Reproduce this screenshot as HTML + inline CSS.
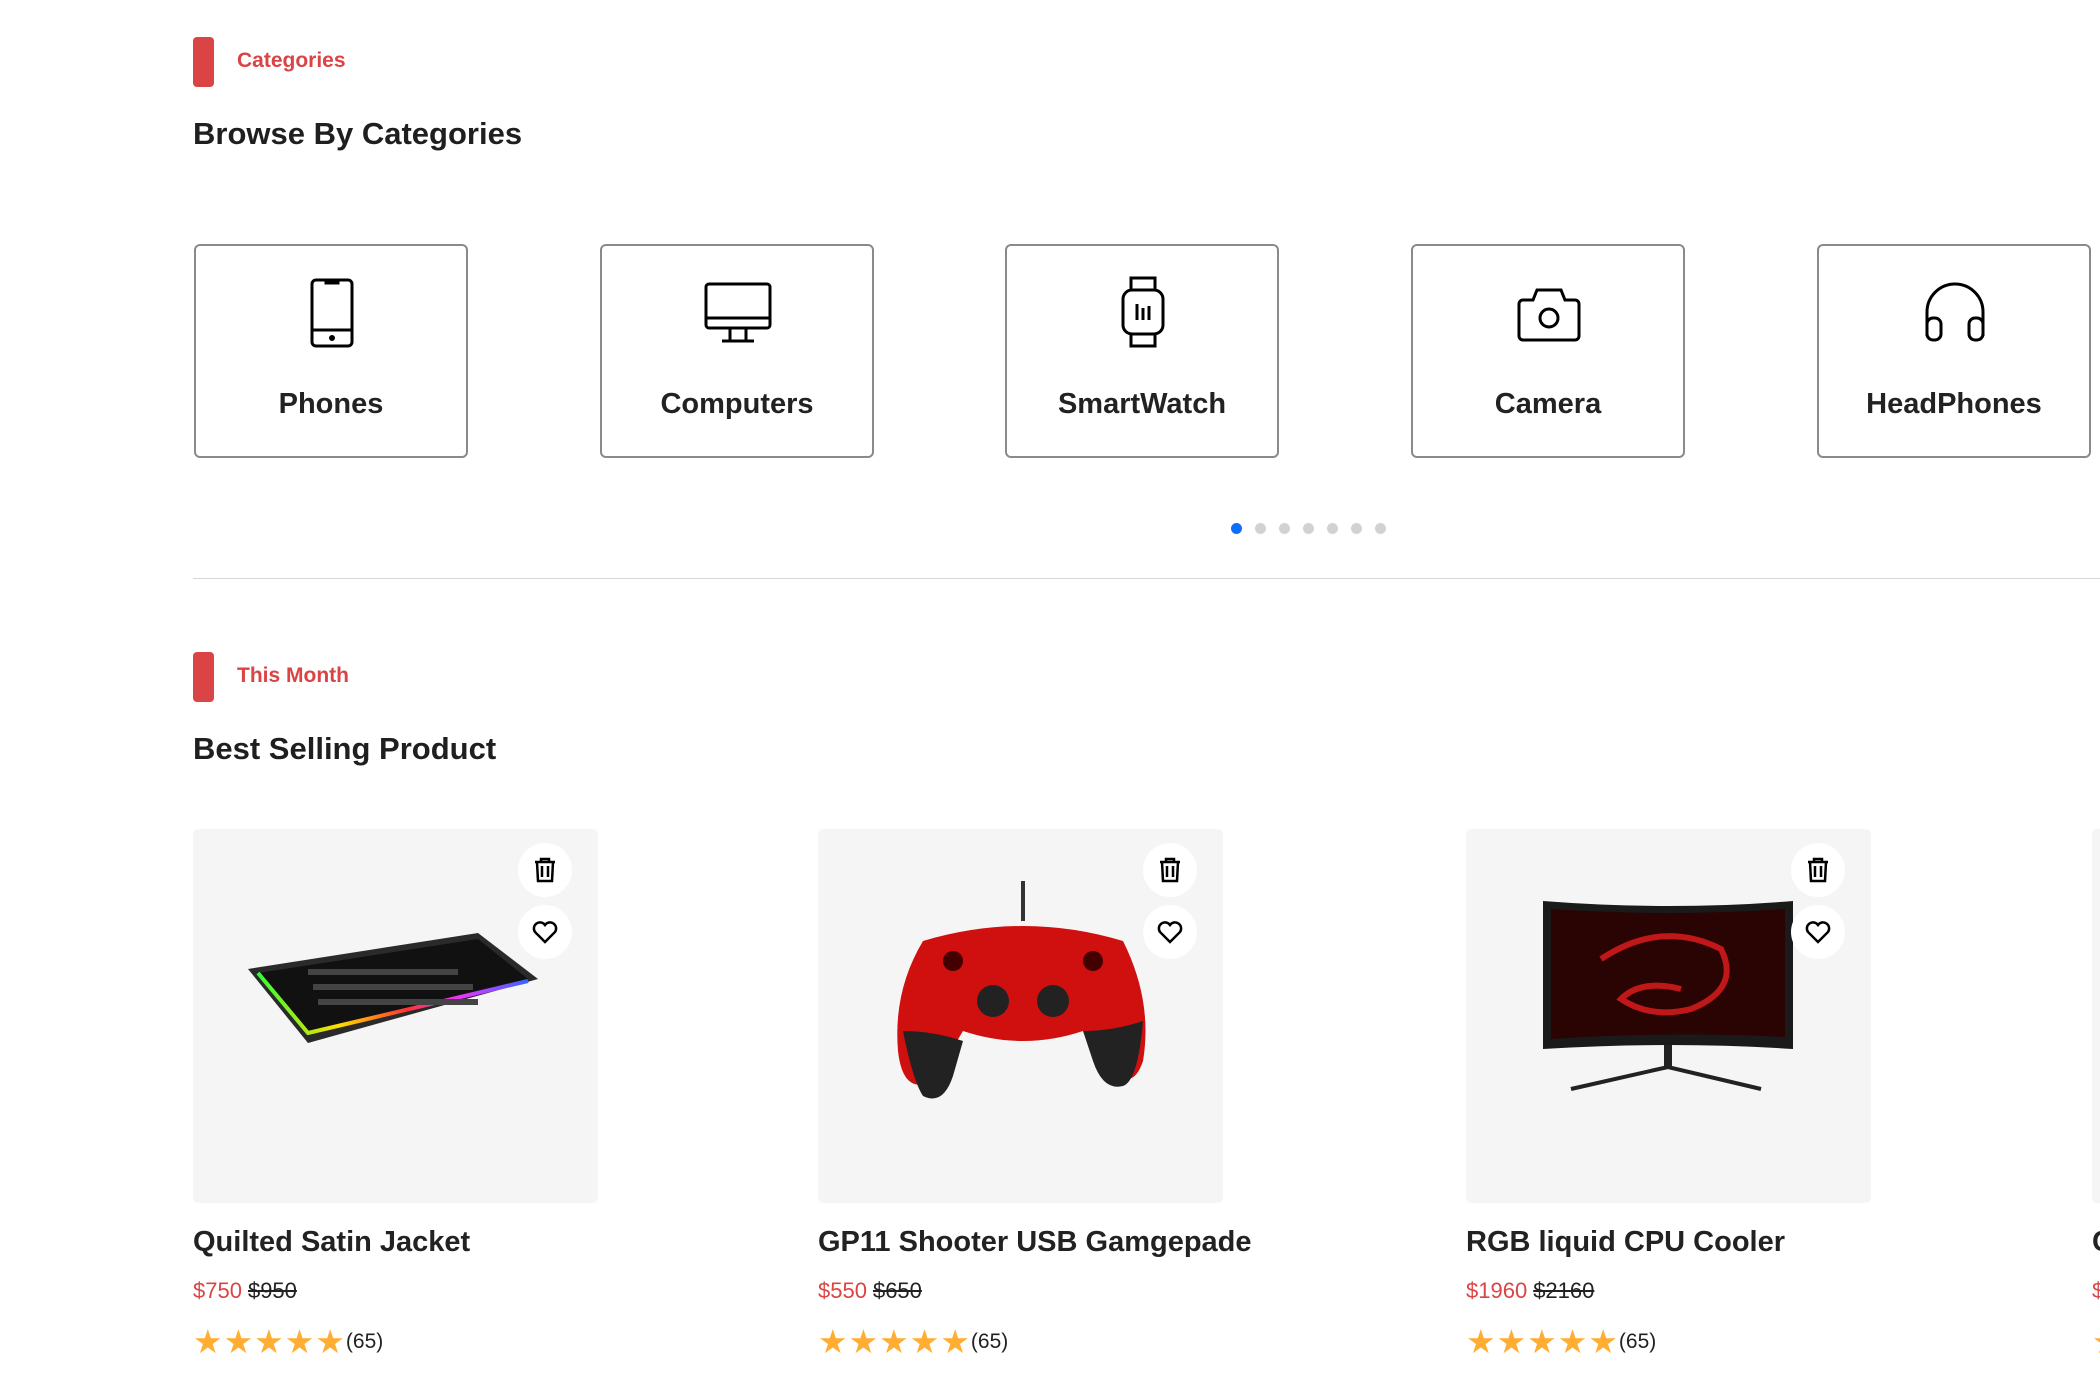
<!DOCTYPE html>
<html><head><meta charset="utf-8"><style>
*{margin:0;padding:0;box-sizing:border-box}
body{width:2100px;height:1400px;background:#fff;font-family:"Liberation Sans",Arial,sans-serif;color:#1f1f1f;position:relative;overflow:hidden}
.abs{position:absolute}
.bar{position:absolute;left:193px;width:21px;height:50px;background:#DB4444;border-radius:4px}
.tag{position:absolute;left:237px;color:#DB4444;font-size:21px;font-weight:bold}
.h{position:absolute;left:193px;font-size:31px;font-weight:bold;letter-spacing:0}
.cat{position:absolute;top:244px;width:274px;height:214px;border:2.5px solid #8a8a8a;border-radius:6px}
.cat svg{position:absolute;left:102px;top:30px}
.cat span{position:absolute;left:0;right:0;top:142px;text-align:center;font-size:29px;font-weight:bold;color:#222}
.dot{position:absolute;top:523px;width:11px;height:11px;border-radius:50%;background:#d2d2d2}
.card{position:absolute;top:829px;width:405px;height:374px;background:#f5f5f5;border-radius:5px}
.ic{position:absolute;left:325px;width:54px;height:54px;border-radius:50%;background:#fff}
.ic svg{position:absolute;left:13px;top:13px}
.t{position:absolute;top:1226px;font-size:29px;font-weight:bold;color:#222}
.p{position:absolute;top:1278px;font-size:22px;color:#DB4444}
.p s{color:#222;margin-left:6px}
.st{position:absolute;top:1322px;font-size:33px;color:#FFAD33;letter-spacing:1px}
.st b{font-weight:normal;color:#222;font-size:21px;letter-spacing:0;position:relative;top:-5px}
</style></head><body>
<div class="bar" style="top:37px"></div>
<div class="tag" style="top:49px">Categories</div>
<div class="h" style="top:116px">Browse By Categories</div>

<div class="cat" style="left:194px"><svg width="68" height="72" viewBox="0 0 68 72" fill="none" stroke="#000" stroke-width="3"><rect x="14" y="4" width="40" height="66" rx="4"/><line x1="14" y1="54" x2="54" y2="54"/><path d="M28 5h12v2H28z"/><circle cx="34" cy="62" r="1.5" fill="#000"/></svg><span>Phones</span></div>
<div class="cat" style="left:600px"><svg width="68" height="72" viewBox="0 0 68 72" fill="none" stroke="#000" stroke-width="3"><rect x="2" y="8" width="64" height="44" rx="3"/><line x1="2" y1="42" x2="66" y2="42"/><line x1="26" y1="52" x2="26" y2="64"/><line x1="42" y1="52" x2="42" y2="64"/><line x1="18" y1="65" x2="50" y2="65"/></svg><span>Computers</span></div>
<div class="cat" style="left:1005px"><svg width="68" height="72" viewBox="0 0 68 72" fill="none" stroke="#000" stroke-width="3"><rect x="22" y="2" width="24" height="12"/><rect x="22" y="58" width="24" height="12"/><rect x="14" y="14" width="40" height="44" rx="9"/><line x1="28" y1="28" x2="28" y2="44"/><line x1="34" y1="32" x2="34" y2="44"/><line x1="40" y1="30" x2="40" y2="44"/></svg><span>SmartWatch</span></div>
<div class="cat" style="left:1411px"><svg width="68" height="72" viewBox="0 0 68 72" fill="none" stroke="#000" stroke-width="3"><path d="M4 28a4 4 0 0 1 4-4h10l4-10h24l4 10h10a4 4 0 0 1 4 4v32a4 4 0 0 1-4 4H8a4 4 0 0 1-4-4z"/><circle cx="34" cy="42" r="9"/></svg><span>Camera</span></div>
<div class="cat" style="left:1817px"><svg width="68" height="72" viewBox="0 0 68 72" fill="none" stroke="#000" stroke-width="3"><path d="M6 60V36a28 28 0 0 1 56 0v24"/><rect x="6" y="42" width="14" height="22" rx="6"/><rect x="48" y="42" width="14" height="22" rx="6"/></svg><span>HeadPhones</span></div>

<div class="dot" style="left:1231px;background:#0d6efd"></div>
<div class="dot" style="left:1255px"></div>
<div class="dot" style="left:1279px"></div>
<div class="dot" style="left:1303px"></div>
<div class="dot" style="left:1327px"></div>
<div class="dot" style="left:1351px"></div>
<div class="dot" style="left:1375px"></div>

<div class="abs" style="left:193px;top:578px;width:1907px;height:1px;background:#d6d6d6"></div>

<div class="bar" style="top:652px"></div>
<div class="tag" style="top:664px">This Month</div>
<div class="h" style="top:731px">Best Selling Product</div>

<!-- card 1 -->
<div class="card" style="left:193px">
<svg class="abs" style="left:55px;top:100px" width="300" height="140" viewBox="0 0 300 140">
<defs><linearGradient id="rb"><stop offset="0" stop-color="#3f3"/><stop offset=".3" stop-color="#fd0"/><stop offset=".55" stop-color="#f33"/><stop offset=".75" stop-color="#e3f"/><stop offset="1" stop-color="#36f"/></linearGradient></defs>
<polygon points="0,40 230,4 290,50 60,114" fill="#2a2a2a"/>
<polygon points="10,44 230,10 280,50 60,104" fill="#111"/>
<polyline points="10,44 60,104 280,52" fill="none" stroke="url(#rb)" stroke-width="4"/>
<g fill="#444"><rect x="60" y="40" width="150" height="6"/><rect x="65" y="55" width="160" height="6"/><rect x="70" y="70" width="160" height="6"/></g>
</svg>
<div class="ic" style="top:14px"><svg width="28" height="28" viewBox="0 0 28 28" fill="none" stroke="#000" stroke-width="2.5"><path d="M4 6h20M10 6V3h8v3M6 6l1 19h14l1-19M11 10v11M17 10v11"/></svg></div>
<div class="ic" style="top:76px"><svg width="28" height="28" viewBox="0 0 28 28" fill="none" stroke="#000" stroke-width="2.5"><path d="M14 24L4 14a5.5 5.5 0 0 1 10-7a5.5 5.5 0 0 1 10 7z"/></svg></div>
</div>
<div class="t" style="left:193px">Quilted Satin Jacket</div>
<div class="p" style="left:193px">$750<s>$950</s></div>
<div class="st" style="left:193px">★★★★★<b>(65)</b></div>

<!-- card 2 -->
<div class="card" style="left:818px">
<svg class="abs" style="left:75px;top:52px" width="260" height="230" viewBox="0 0 260 230">
<line x1="130" y1="0" x2="130" y2="40" stroke="#333" stroke-width="4"/>
<path d="M30 60Q130 30 230 60Q260 120 250 180Q240 210 220 190L190 150Q130 170 70 150L40 200Q10 215 5 170Q0 110 30 60z" fill="#d0100f"/>
<path d="M10 150Q20 200 30 215Q50 225 60 195L70 160Q40 150 10 150z" fill="#222"/>
<path d="M250 140Q245 200 230 205Q210 210 200 180L190 150Q220 150 250 140z" fill="#222"/>
<circle cx="100" cy="120" r="16" fill="#222"/><circle cx="160" cy="120" r="16" fill="#222"/>
<circle cx="60" cy="80" r="10" fill="#400"/><circle cx="200" cy="80" r="10" fill="#400"/>
</svg>
<div class="ic" style="top:14px"><svg width="28" height="28" viewBox="0 0 28 28" fill="none" stroke="#000" stroke-width="2.5"><path d="M4 6h20M10 6V3h8v3M6 6l1 19h14l1-19M11 10v11M17 10v11"/></svg></div>
<div class="ic" style="top:76px"><svg width="28" height="28" viewBox="0 0 28 28" fill="none" stroke="#000" stroke-width="2.5"><path d="M14 24L4 14a5.5 5.5 0 0 1 10-7a5.5 5.5 0 0 1 10 7z"/></svg></div>
</div>
<div class="t" style="left:818px">GP11 Shooter USB Gamgepade</div>
<div class="p" style="left:818px">$550<s>$650</s></div>
<div class="st" style="left:818px">★★★★★<b>(65)</b></div>

<!-- card 3 -->
<div class="card" style="left:1466px">
<svg class="abs" style="left:75px;top:70px" width="260" height="200" viewBox="0 0 260 200">
<path d="M2 2Q130 12 252 2V150Q130 142 2 150z" fill="#1a1a1a"/>
<path d="M10 10Q130 18 244 10V138Q130 132 10 140z" fill="#2a0303"/>
<path d="M60 60Q120 20 180 50Q200 90 150 110Q110 120 80 100Q100 80 140 90" fill="none" stroke="#c01818" stroke-width="6"/>
<line x1="127" y1="146" x2="127" y2="168" stroke="#222" stroke-width="8"/>
<path d="M30 190L127 168L220 190" fill="none" stroke="#222" stroke-width="4"/>
</svg>
<div class="ic" style="top:14px"><svg width="28" height="28" viewBox="0 0 28 28" fill="none" stroke="#000" stroke-width="2.5"><path d="M4 6h20M10 6V3h8v3M6 6l1 19h14l1-19M11 10v11M17 10v11"/></svg></div>
<div class="ic" style="top:76px"><svg width="28" height="28" viewBox="0 0 28 28" fill="none" stroke="#000" stroke-width="2.5"><path d="M14 24L4 14a5.5 5.5 0 0 1 10-7a5.5 5.5 0 0 1 10 7z"/></svg></div>
</div>
<div class="t" style="left:1466px">RGB liquid CPU Cooler</div>
<div class="p" style="left:1466px">$1960<s>$2160</s></div>
<div class="st" style="left:1466px">★★★★★<b>(65)</b></div>

<!-- card 4 partial -->
<div class="card" style="left:2092px"></div>
<div class="t" style="left:2092px">C</div>
<div class="p" style="left:2092px">$</div>
<div class="st" style="left:2092px">★</div>
</body></html>
